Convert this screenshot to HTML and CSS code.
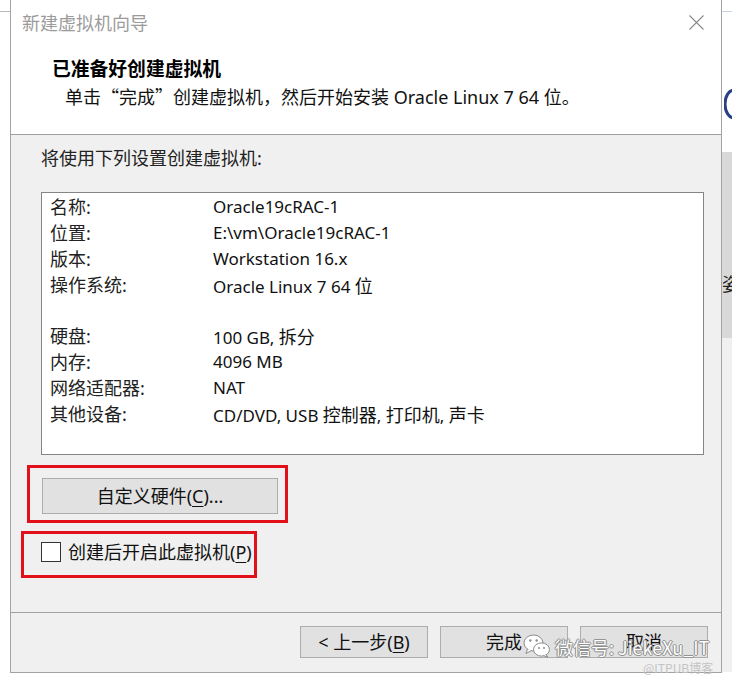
FILE: index.html
```html
<!DOCTYPE html>
<html lang="zh-CN">
<head>
<meta charset="utf-8">
<title>新建虚拟机向导</title>
<link rel="stylesheet" href="styles.css">
</head>
<body>
<div class="screen">
  <div class="side side-left">
    <div class="edge-line"></div>
  </div>

  <div class="dialog">
    <div class="titlebar">
      <span class="title">新建虚拟机向导</span>
      <svg class="close" width="15" height="15" viewBox="0 0 15 15" aria-hidden="true">
        <path d="M0.5 0.5 L14.5 14.5 M14.5 0.5 L0.5 14.5" stroke="#8a8a8a" stroke-width="1.1" fill="none"/>
      </svg>
    </div>

    <div class="header">
      <h1 class="heading">已准备好创建虚拟机</h1>
      <p class="subtitle">单击<span class="cjk">“</span>完成<span class="cjk">”</span>创建虚拟机，然后开始安装 Oracle Linux 7 64 位。</p>
    </div>

    <div class="body">
      <p class="intro">将使用下列设置创建虚拟机:</p>
      <div class="summary">
        <div class="row"><span class="key">名称:</span><span class="val">Oracle19cRAC-1</span></div>
        <div class="row"><span class="key">位置:</span><span class="val">E:\vm\Oracle19cRAC-1</span></div>
        <div class="row"><span class="key">版本:</span><span class="val">Workstation 16.x</span></div>
        <div class="row"><span class="key">操作系统:</span><span class="val">Oracle Linux 7 64 <span class="cjk">位</span></span></div>
        <div class="row"><span class="key"></span><span class="val"></span></div>
        <div class="row"><span class="key">硬盘:</span><span class="val">100 GB, <span class="cjk">拆分</span></span></div>
        <div class="row"><span class="key">内存:</span><span class="val">4096 MB</span></div>
        <div class="row"><span class="key">网络适配器:</span><span class="val">NAT</span></div>
        <div class="row"><span class="key">其他设备:</span><span class="val">CD/DVD, USB <span class="cjk">控制器</span>, <span class="cjk">打印机</span>, <span class="cjk">声卡</span></span></div>
      </div>

      <div class="custom-wrap">
        <button class="btn btn-custom" type="button">自定义硬件(<u>C</u>)...</button>
        <span class="mark mark-custom"></span>
      </div>

      <div class="check-wrap">
        <span class="checkbox"></span>
        <span class="check-label">创建后开启此虚拟机(<u>P</u>)</span>
        <span class="mark mark-check"></span>
      </div>
    </div>

    <div class="footer">
      <button class="btn btn-nav" type="button">&lt; 上一步(<u>B</u>)</button>
      <button class="btn btn-nav" type="button">完成</button>
      <button class="btn btn-nav" type="button">取消</button>

      <div class="watermark">
        <svg class="wechat" width="28" height="24" viewBox="0 0 28 24" aria-hidden="true">
          <ellipse cx="10.5" cy="9" rx="9.5" ry="8" fill="#fff" stroke="#8c8c8c" stroke-width="1"/>
          <path d="M4.5 15 L3 19.5 L8.5 16.5" fill="#fff" stroke="#8c8c8c" stroke-width="1"/>
          <circle cx="7.3" cy="6.5" r="1.2" fill="#8c8c8c"/>
          <circle cx="13.7" cy="6.5" r="1.2" fill="#8c8c8c"/>
          <ellipse cx="18.5" cy="15.5" rx="8" ry="6.6" fill="#fff" stroke="#8c8c8c" stroke-width="1"/>
          <path d="M23 20.5 L25 23.3 L20.5 21.6" fill="#fff" stroke="#8c8c8c" stroke-width="1"/>
          <circle cx="16" cy="14" r="1" fill="#8c8c8c"/>
          <circle cx="21" cy="14" r="1" fill="#8c8c8c"/>
        </svg>
        <span class="wm-text">微信号: JiekeXu_IT</span>
        <span class="wm-sub">@ITPUB博客</span>
      </div>
    </div>
  </div>

  <div class="side side-right">
    <div class="edge-line edge-line-blue"></div>
    <div class="right-top">
      <svg class="arc" width="10" height="32" viewBox="0 0 10 32" aria-hidden="true">
        <path d="M10 2 A 9 14 0 0 0 10 30" stroke="#2a3f85" stroke-width="3" fill="none"/>
      </svg>
    </div>
    <div class="right-gray"><span class="cut-char">姿</span></div>
    <div class="right-light"></div>
  </div>
</div>
</body>
</html>
```

FILE: styles.css
```css
* { box-sizing: border-box; }

html, body {
  margin: 0;
  padding: 0;
  background: #ffffff;
}

body {
  font-family: "Noto Sans", "Noto Sans CJK SC", sans-serif;
  color: #111;
  width: 732px;
  height: 683px;
  overflow: hidden;
}

.screen {
  display: flex;
  width: 732px;
  height: 683px;
}

.cjk {
  font-family: "Noto Sans CJK SC", sans-serif;
  font-size: 18px;
}

/* outside strips */
.side {
  width: 10px;
  flex: none;
  display: flex;
  flex-direction: column;
  overflow: hidden;
}

.edge-line {
  margin-top: 11px;
  height: 1px;
  background: #b8b8b8;
  flex: none;
}

.edge-line-blue { background: #c9d3e3; }

.right-top {
  height: 140px;
  flex: none;
  padding-top: 76px;
  background: #fff;
}

.arc { display: block; margin-left: 2px; }

.right-gray {
  height: 186px;
  flex: none;
  background: #d9d9d9;
  padding-top: 118px;
  overflow: hidden;
}

.cut-char {
  display: block;
  width: 10px;
  overflow: hidden;
  font-family: "Noto Sans CJK SC", sans-serif;
  font-size: 18px;
  line-height: 26px;
  color: #222;
  white-space: nowrap;
}

.right-light {
  height: 334px;
  flex: none;
  background: #f0f0f0;
}

/* dialog */
.dialog {
  width: 712px;
  height: 673px;
  flex: none;
  border-left: 1px solid #a3a3a3;
  border-right: 1px solid #a3a3a3;
  border-bottom: 1px solid #a3a3a3;
  display: flex;
  flex-direction: column;
  background: #fff;
}

.titlebar {
  height: 45px;
  flex: none;
  display: flex;
  align-items: center;
  justify-content: space-between;
  padding: 0 17px 0 11px;
}

.title {
  font-family: "Noto Sans CJK SC", sans-serif;
  font-size: 18px;
  line-height: 26px;
  color: #9b9b9b;
  margin-top: -1px;
}

.close { display: block; margin-top: -1px; }

.header {
  height: 90px;
  flex: none;
  padding: 10px 0 0 41px;
  border-bottom: 1px solid #a0a0a0;
}

.heading {
  margin: 0;
  font-family: "Noto Sans CJK SC", sans-serif;
  font-weight: 700;
  font-size: 18.8px;
  line-height: 26px;
  color: #000;
}

.subtitle {
  margin: 2px 0 0 13px;
  font-size: 18px;
  line-height: 26px;
  color: #111;
}

.body {
  height: 478px;
  flex: none;
  background: #f0f0f0;
  padding: 10px 17px 0 30px;
  border-bottom: 1px solid #a0a0a0;
}

.intro {
  margin: 0;
  font-size: 18px;
  line-height: 26px;
  color: #222;
}

.summary {
  margin-top: 21px;
  height: 263px;
  background: #fff;
  border: 1px solid #858585;
  padding: 1px 8px 0 8px;
}

.row {
  display: grid;
  grid-template-columns: 163px 1fr;
  height: 25.9px;
  line-height: 26px;
  font-size: 18px;
}

.key { color: #222; }
.val { color: #111; font-size: 17px; }

.custom-wrap {
  position: relative;
  margin-top: 23px;
  margin-left: 1px;
  width: 236px;
  height: 36px;
}

.btn {
  font-family: "Noto Sans", "Noto Sans CJK SC", sans-serif;
  font-size: 18px;
  color: #111;
  background: #e1e1e1;
  border: 1px solid #adadad;
  border-radius: 0;
  padding: 0;
  margin: 0;
}

.btn u { text-underline-offset: 3px; text-decoration-thickness: 1px; }

.btn-custom {
  width: 236px;
  height: 36px;
  line-height: 34px;
}

.mark {
  position: absolute;
  border: 3px solid #e2101a;
  pointer-events: none;
}

.mark-custom {
  left: -15px;
  top: -13px;
  width: 261px;
  height: 58px;
}

.check-wrap {
  position: relative;
  margin-top: 28px;
  display: flex;
  align-items: center;
  height: 20px;
}

.checkbox {
  width: 20px;
  height: 20px;
  flex: none;
  background: #fff;
  border: 1px solid #333;
}

.check-label {
  margin-left: 7px;
  font-size: 18px;
  line-height: 26px;
  color: #111;
}

.check-label u { text-underline-offset: 3px; text-decoration-thickness: 1px; }

.mark-check {
  left: -20px;
  top: -11px;
  width: 236px;
  height: 47px;
}

.footer {
  position: relative;
  flex: 1;
  background: #f0f0f0;
  display: flex;
  justify-content: flex-end;
  align-items: flex-start;
  gap: 12px;
  padding: 13px 13px 0 0;
}

.btn-nav {
  width: 128px;
  height: 32px;
  line-height: 30px;
}

.watermark {
  position: absolute;
  left: 512px;
  top: 21px;
  width: 200px;
  height: 40px;
}

.wechat {
  position: absolute;
  left: 0;
  top: 0;
}

.wm-text {
  position: absolute;
  left: 32px;
  top: 0;
  font-family: "Noto Sans CJK SC", sans-serif;
  font-size: 18px;
  line-height: 26px;
  color: #fff;
  white-space: nowrap;
  text-shadow: 0 0 1px #7a7a7a, 0 0 1px #7a7a7a, 1px 0 0 #9a9a9a, -1px 0 0 #9a9a9a, 0 1px 0 #9a9a9a, 0 -1px 0 #9a9a9a;
}

.wm-sub {
  position: absolute;
  left: 120px;
  top: 25px;
  font-family: "Noto Sans CJK SC", sans-serif;
  font-size: 12px;
  line-height: 18px;
  color: #c4c4c4;
  white-space: nowrap;
}
```
